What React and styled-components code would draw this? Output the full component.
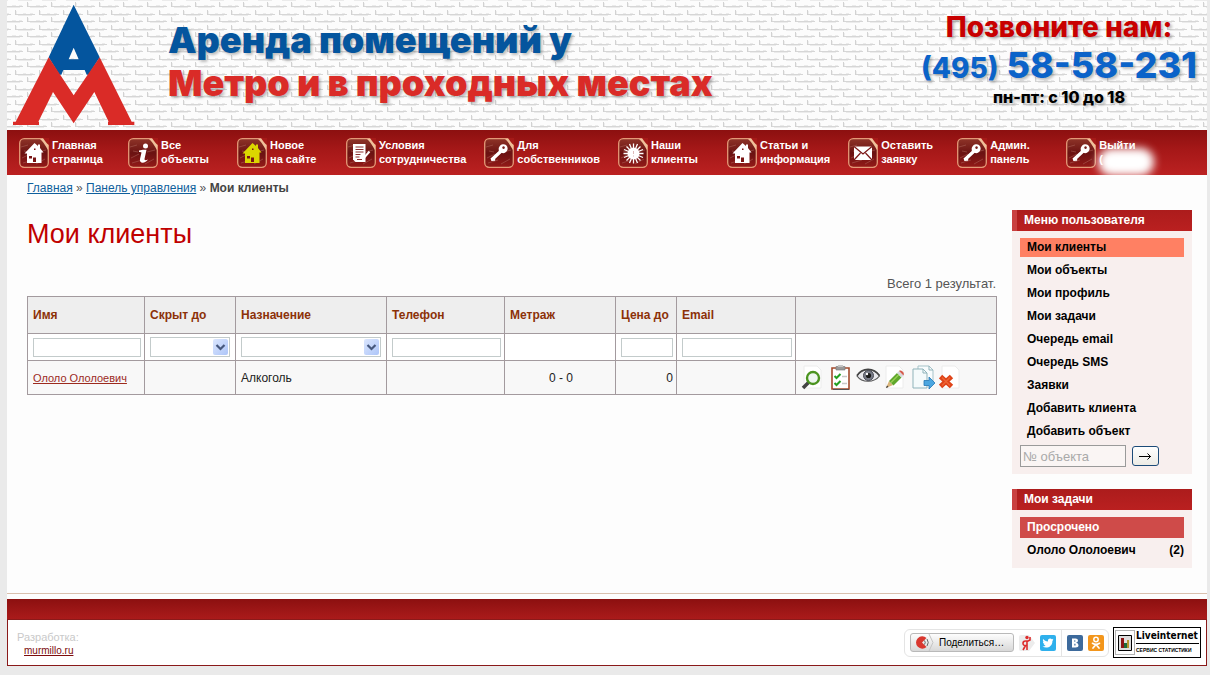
import React from 'react';
import styled, { createGlobalStyle, css } from 'styled-components';

const GlobalStyle = createGlobalStyle`
  * { box-sizing: border-box; }

  body {
    margin: 0;
    background: #eaeaea;
    color: #555;
    font-family: "Liberation Sans", Arial, sans-serif;
    font-size: 12px;
  }

  input, select, button { font-family: inherit; }
`;

const Page = styled.div`
  margin: 0 3px 9px 7px;
  background: #fdfdfd;
`;

const Header = styled.header`
  position: relative;
  display: flex;
  align-items: flex-start;
  height: 130px;
  padding: 4px 10px 0 5px;
  overflow: hidden;
`;

const Texture = styled.svg`
  position: absolute;
  top: 0;
  left: 0;
  width: 100%;
  height: 100%;
`;

const LogoLink = styled.a`
  position: relative;
  display: block;

  svg { display: block; }
`;

const Slogan = styled.div`
  position: relative;
  flex: 1;
  padding: 15px 0 0 32px;
  font-family: Inter, Roboto, sans-serif;
  font-size: 36px;
  font-weight: 900;
  line-height: 43px;
  color: #da2b27;
  text-shadow: 2px 2px 3px rgba(0, 0, 0, 0.25);
  white-space: nowrap;
`;

const SloganTop = styled.div`
  color: #04559e;
`;

const Contacts = styled.div`
  position: relative;
  padding-top: 5px;
  font-family: Inter, Roboto, sans-serif;
  font-weight: 800;
  text-align: center;
  white-space: nowrap;
  text-shadow: 2px 2px 3px rgba(0, 0, 0, 0.25);
`;

const CallUs = styled.div`
  font-size: 28px;
  line-height: 36px;
  color: #c80000;
`;

const Phone = styled.div`
  font-size: 36px;
  line-height: 40px;
  color: #0b63c9;

  small { font-size: 28px; }
`;

const Hours = styled.div`
  font-size: 16px;
  line-height: 18px;
  color: #000;
`;

const Nav = styled.nav`
  display: flex;
  height: 45px;
  padding: 8px 0 0 12px;
  background: linear-gradient(#8c1010, #a61818 45%, #bb2121);
`;

const NavLink = styled.a`
  position: relative;
  display: flex;
  gap: 3px;
  min-width: 109px;
  padding-right: 18px;
  font-weight: bold;
  font-size: 11px;
  line-height: 14px;
  color: #fff;
  text-decoration: none;
  white-space: nowrap;

  svg { flex: none; }
`;

const Glow = styled.span`
  position: absolute;
  top: 10px;
  left: 32px;
  width: 56px;
  height: 28px;
  border-radius: 14px;
  background: #fff;
  filter: blur(4px);
`;

const Crumbs = styled.div`
  padding: 6px 20px 0;
  line-height: 14px;

  a { color: #0f5f9c; }
  b { color: #444; }
`;

const Content = styled.div`
  display: grid;
  grid-template-columns: 1fr 180px;
  gap: 15px;
  padding: 15px 15px 25px 20px;
  border-bottom: 1px solid #d9c0ae;
`;

const Title = styled.h1`
  margin: 9px 0 28px;
  font-size: 27px;
  font-weight: normal;
  line-height: 30px;
  color: #c00000;
`;

const Summary = styled.div`
  padding: 0 1px 5px 0;
  text-align: right;
  font-size: 13px;
  line-height: 14px;
`;

const Grid = styled.table`
  width: 100%;
  table-layout: fixed;
  border-collapse: collapse;
  color: #222;

  th, td {
    border: 1px solid #a39a9e;
    padding: 0 3px 0 5px;
    text-align: left;
  }
  th {
    height: 37px;
    background: #eee;
    color: #8c3108;
    white-space: nowrap;
  }
`;

const FilterRow = styled.tr`
  height: 27px;
  background: #fff;
`;

const DataRow = styled.tr`
  height: 34px;
  background: #f8f8f8;
`;

const Cell = styled.td`
  && { text-align: ${props => props.$align || 'left'}; }
`;

const ClientLink = styled.a`
  font-size: 11px;
  color: #9c2a1e;
`;

const FilterInput = styled.input`
  display: block;
  width: 100%;
  height: 19px;
  border: 1px solid #c3cbcb;
  background: #fff;
  font-size: 11px;
`;

const SelectBox = styled.span`
  position: relative;
  display: block;
  margin-right: 2px;

  select {
    display: block;
    width: 100%;
    height: 20px;
    appearance: none;
    border: 1px solid #c3cbcb;
    border-radius: 0;
    background: #fff;
    font-size: 11px;
  }
  svg {
    position: absolute;
    top: 2px;
    right: 2px;
    pointer-events: none;
  }
`;

const Actions = styled.div`
  display: flex;
  gap: 3px;

  a { display: block; height: 26px; }
  svg { display: block; }
`;

const Panel = styled.section`
  margin-bottom: ${props => (props.$last ? 0 : 15)}px;
  background: #f8efee;
`;

const PanelTitle = styled.h2`
  margin: 0;
  padding-left: 7px;
  border-left: 5px solid #c94040;
  background: linear-gradient(#ac1c1c, #ba2020);
  font-size: 12px;
  line-height: 21px;
  color: #fff;
`;

const PanelBody = styled.div`
  padding: 7px 8px;
`;

const MenuLink = styled.a`
  display: block;
  margin-bottom: 4px;
  padding-left: 7px;
  font-weight: bold;
  line-height: 19px;
  color: #000;
  text-decoration: none;

  ${props => props.$active && css`background: #ff8063;`}
`;

const SearchForm = styled.form`
  display: flex;
  align-items: center;
  gap: 6px;

  input {
    width: 106px;
    height: 22px;
    padding: 0 2px;
    border: 1px solid #9a9a9a;
    background: #faf5f4;
    font-size: 13px;
  }
  input::placeholder { color: #a9a9a9; }
  button {
    width: 27px;
    height: 20px;
    padding: 0;
    border: 1px solid #1c4b78;
    border-radius: 3px;
    background: linear-gradient(#fff, #ecebe5);
    line-height: 0;
  }
`;

const Overdue = styled.div`
  margin-bottom: 2px;
  padding-left: 7px;
  background: #cf4b49;
  font-weight: bold;
  line-height: 21px;
  color: #fff;
`;

const TaskLink = styled.a`
  display: flex;
  justify-content: space-between;
  padding-left: 7px;
  font-weight: bold;
  line-height: 21px;
  color: #000;
  text-decoration: none;
`;

const FooterBar = styled.div`
  height: 20px;
  margin-top: 5px;
  background: linear-gradient(#8c1010, #aa1b1b);
`;

const Footer = styled.footer`
  display: flex;
  justify-content: space-between;
  padding: 7px 5px 7px 9px;
  border: 1px solid #8a1a1a;
  background: #fff;
`;

const Developer = styled.div`
  padding-top: 3px;
  font-size: 11px;
  line-height: 14px;
  color: #c9c9c9;

  a {
    display: block;
    padding-left: 7px;
    color: #7d0c0c;
    font-size: 10px;
  }
`;

const Badges = styled.div`
  display: flex;
  gap: 4px;
  align-items: center;
`;

const ShareBox = styled.div`
  display: flex;
  align-items: center;
  height: 28px;
  gap: 5px;
  padding: 0 4px 0 5px;
  border: 1px solid #e4e4e4;
  border-radius: 6px;

  a, svg { display: block; }
`;

const ShareButton = styled.button`
  display: flex;
  align-items: center;
  gap: 5px;
  width: 104px;
  height: 19px;
  padding: 0 4px;
  border: 1px solid #b9b9b9;
  border-radius: 3px;
  background: linear-gradient(#fdfdfd, #d8d8d8);
  font-size: 10px;
  color: #000;
  white-space: nowrap;

  svg { flex: none; }
`;

const ShareGroup = styled.div`
  display: flex;
  gap: 5px;
  height: 26px;
  align-items: center;
  padding-left: 5px;
  border-left: 1px solid #e4e4e4;
`;

const Counter = styled.a`
  display: flex;
  align-items: center;
  width: 88px;
  height: 31px;
  padding-left: 1px;
  gap: 1px;
  border: 1px solid #000;
  background: #fff;
  color: #000;
  text-decoration: none;
  white-space: nowrap;

  svg { flex: none; }
  span { width: 63px; }
  b {
    display: block;
    border-bottom: 1px solid #000;
    font-family: "DejaVu Sans Condensed", "DejaVu Sans", sans-serif;
    font-size: 10px;
    line-height: 14px;
  }
  small {
    display: block;
    font-size: 5px;
    font-weight: bold;
    line-height: 12px;
  }
`;

const Logo = () => (
  <svg width="124" height="122" viewBox="36 12 372 366">
    <path fill="#04559e" fillRule="evenodd" d="M221 14 L299 172 L266 224 H260 L254 210 H190 L184 224 H178 L146 172 Z M221 143 L206 178 H236 Z" />
    <path fill="#da2b27" d="M146 172 L221 286 L299 172 L395 365 H403 V375 H324 V365 H326 L283 276 L221 370 L159 276 L115 365 H117 V375 H39 V365 H47 Z" />
  </svg>
);

const Bricks = () => (
  <Texture>
    <defs>
      <pattern id="bricks" width="24" height="15" patternUnits="userSpaceOnUse" x="20" y="2">
        <rect width="24" height="15" fill="#fcfcfc" />
        <path d="M1 4.500H20M13 12.500H24M0 12.500H8" stroke="#d6d6d6" />
        <path d="M3 5.500H17M15 13.500H24M0 13.500H5M9 3.500H13M16 3.500H19M20 11.500H23M3 11.500H6" stroke="#ebebeb" />
        <path d="M.500 0V5M12.500 8V13" stroke="#d2d2d2" />
        <path d="M1.500 1V4M13.500 9V12" stroke="#eee" />
      </pattern>
    </defs>
    <rect width="100%" height="100%" fill="url(#bricks)" />
  </Texture>
);

const House = ({ color = '#fff' }) => (
  <g>
    <path fill={color} d="M15.500 5 L19 8 V6.500 H21 V10 L24.500 14.500 H22.500 V25 H8 V15.500 H5.500 Z" />
    <path fill="#7a1515" d="M10 18h3v2.500h-3zM14 19.500h3V24h-3zM15 10.500h1.500V12H15z" />
  </g>
);

const Key = () => (
  <g>
    <path fill="#fff" fillRule="evenodd" d="M22 7a4.500 4.500 0 0 1 .5 6.500a4.500 4.500 0 0 1-5.500 1L10.500 20.500l1 1.500-1.500 1.200-1.300-1.200-1.200 1-1-2.500L14.800 13a4.800 4.800 0 0 1 1-5a4.500 4.500 0 0 1 6.200-1zM19.500 8.300a1.300 1.300 0 1 0 .1 0z" />
    <path d="M8.500 21.500L17 13.500" stroke="#fff" strokeWidth="2.800" strokeLinecap="round" />
  </g>
);

const glyphs = {
  home: <House />,
  fresh: <House color="#dcd600" />,
  info: (
    <g fill="#fff">
      <circle cx="17.500" cy="8" r="2.500" />
      <path d="M11 12.500 C14 11.500 16 11.500 18.500 11.800 L16.500 21 C16.500 22.500 18 22.500 20 21.500 C18 25 11 26.500 12 21 L13.500 14.500 C12.500 14 11.500 14 11 14 Z" />
    </g>
  ),
  terms: (
    <g>
      <path fill="#fff" d="M7 6h12.500v18H9.500L7 21.500z" />
      <path stroke="#8a3030" d="M9.500 9h8M9.500 11.500h8M9.500 14h8M9.500 16.500h5M9.500 19h4M11 21.500h5" />
      <path d="M15 17.500l2.500 3 6-7" fill="none" stroke="#fff" strokeWidth="2" />
    </g>
  ),
  key: <Key />,
  sun: (
    <g>
      <path stroke="#fff" strokeWidth="1.300" d="M15.500 5.500v20M5.500 15.500h20M8.500 8.500l14 14M22.500 8.500l-14 14M11.500 6l8 19M19.500 6l-8 19M6 11.500l19 8M6 19.500l19-8" />
      <circle cx="15.500" cy="15.500" r="6" fill="#fff" />
      <path stroke="#dcb8b8" d="M15.500 13v3M15.500 17.500v1" />
    </g>
  ),
  mail: (
    <g>
      <path fill="#fff" d="M6 8.500h18v13.500H6z" />
      <path fill="none" stroke="#7a1515" strokeWidth="1.200" d="M6 8.500l9 7.500 9-7.500M6 22l6.500-7M24 22l-6.500-7" />
    </g>
  ),
};

const NavIcon = ({ type }) => (
  <svg width="30" height="30" viewBox="0 0 30 30">
    <defs>
      <linearGradient id="plate" x1="0" y1="0" x2="0" y2="1">
        <stop offset="0" stopColor="#8e3428" />
        <stop offset=".5" stopColor="#6a1212" />
        <stop offset="1" stopColor="#941a18" />
      </linearGradient>
    </defs>
    <rect x=".7" y=".7" width="28.600" height="28.600" rx="4.500" fill="url(#plate)" stroke="#e49a78" strokeWidth="1.300" />
    <path d="M2 9l7-2M3 20l8-4M4 25l10-3M17 26l9-5M19 14l8-2M5 13l5 1" stroke="#b06a60" strokeWidth=".7" opacity=".7" />
    <path d="M21 1h5.500L29 5v7C27 9 25.500 5 21 1z" fill="#f0c09a" />
    <path d="M24 0h6v7C28 6 26 3 24 0z" fill="#a51a18" />
    {glyphs[type]}
  </svg>
);

const SelectArrow = () => (
  <svg width="15" height="16" viewBox="0 0 15 16">
    <defs>
      <linearGradient id="arrowBg" x1="0" y1="0" x2="1" y2="1">
        <stop offset="0" stopColor="#dbe6fe" />
        <stop offset="1" stopColor="#adc5f8" />
      </linearGradient>
    </defs>
    <rect width="15" height="16" rx="2" fill="url(#arrowBg)" />
    <path d="M3.500 6l4 4 4-4" fill="none" stroke="#46587e" strokeWidth="2.200" />
  </svg>
);

const Sheet = ({ x = 2 }) => (
  <path d={`M${x} 1h13l4 4v18h-17z`} fill="#fff" stroke="#ececec" />
);

const actionIcons = [
  {
    label: 'Найти', width: 25,
    art: (
      <>
        <Sheet x={3} />
        <path d="M8 17l-6 6" stroke="#444" strokeWidth="3.500" />
        <circle cx="12" cy="13" r="6" fill="#eef6f0" stroke="#4b9420" strokeWidth="2.400" />
      </>
    ),
  },
  {
    label: 'Задачи', width: 24,
    art: (
      <>
        <path d="M3 3h17v21H3z" fill="#fff" stroke="#a34a2c" strokeWidth="1.600" />
        <path d="M4 24.500h16" stroke="#555" />
        <path d="M7 1.500h9V5H7z" fill="#999" stroke="#777" strokeWidth=".6" />
        <path d="M9 0h5v2H9z" fill="#c4c4c4" />
        <path d="M5.500 11l2 2 4-4M5.500 18l2 2 4-4" fill="none" stroke="#22a022" strokeWidth="2" />
        <path d="M13 11.500h5M13 18.500h5" stroke="#c8c8c8" strokeWidth="1.500" />
      </>
    ),
  },
  {
    label: 'Просмотр', width: 25,
    art: (
      <>
        <path d="M1 11C6 3 18 3 23.500 11 18 18 6 18 1 11z" fill="#e8e8ec" stroke="#555" strokeWidth="1.200" />
        <path d="M1 10.500C6 2 18 2 23.500 10.500" fill="none" stroke="#444" strokeWidth="1.500" />
        <circle cx="12.500" cy="10.500" r="5" fill="#777a86" stroke="#484a54" />
        <circle cx="12.500" cy="10.500" r="2.600" fill="#181818" />
        <circle cx="11" cy="9" r="1.200" fill="#fff" />
      </>
    ),
  },
  {
    label: 'Изменить', width: 24,
    art: (
      <>
        <Sheet />
        <path d="M2 23l3-7 4 4z" fill="#d9b47a" />
        <path d="M5 16l8-8 4.500 4.500-8 8z" fill="#5fa72c" />
        <path d="M7 17.500l8-8" stroke="#99cf54" strokeWidth="1.500" />
        <path d="M13 8l2-2 4.500 4.500-2 2z" fill="#d6d8dc" />
        <path d="M15 6c2-1.500 6 1.500 4.500 4.500z" fill="#d55a4c" />
        <path d="M2 23l1-2.500 1.500 1.500z" fill="#333" />
      </>
    ),
  },
  {
    label: 'Копировать', width: 25,
    art: (
      <>
        <path d="M7 1h11l4 4v14H7z" fill="#f8fcfd" stroke="#a6c3c9" />
        <path d="M2 4h10l4 4v15H2z" fill="#f4fafb" stroke="#8fb3ba" />
        <path d="M12 4v4h4M18 1v4h4" fill="none" stroke="#8fb3ba" />
        <path d="M13 15.500h5V12l6 6-6 6v-3.500h-5z" fill="#4ba6e0" stroke="#2477b5" strokeWidth=".8" />
      </>
    ),
  },
  {
    label: 'Удалить', width: 23,
    art: (
      <>
        <Sheet x={3} />
        <path d="M1.500 11.500l11 10M12.500 11.500l-11 10" stroke="#de4318" strokeWidth="5" />
        <path d="M3 12.500l8 8M11 12.500l-8 8" stroke="#ee6434" strokeWidth="1.500" />
      </>
    ),
  },
];

const navItems = [
  { icon: 'home', lines: ['Главная', 'страница'] },
  { icon: 'info', lines: ['Все', 'объекты'] },
  { icon: 'fresh', lines: ['Новое', 'на сайте'] },
  { icon: 'terms', lines: ['Условия', 'сотрудничества'] },
  { icon: 'key', lines: ['Для', 'собственников'] },
  { icon: 'sun', lines: ['Наши', 'клиенты'] },
  { icon: 'home', lines: ['Статьи и', 'информация'] },
  { icon: 'mail', lines: ['Оставить', 'заявку'] },
  { icon: 'key', lines: ['Админ.', 'панель'] },
  { icon: 'key', lines: ['Выйти', '('], glow: true },
];

const columns = [
  { title: 'Имя', width: 117, filter: 'input' },
  { title: 'Скрыт до', width: 91, filter: 'select' },
  { title: 'Назначение', width: 151, filter: 'select' },
  { title: 'Телефон', width: 118, filter: 'input' },
  { title: 'Метраж', width: 111 },
  { title: 'Цена до', width: 61, filter: 'input' },
  { title: 'Email', width: 119, filter: 'input' },
  { title: '' },
];

const menuItems = [
  'Мои клиенты',
  'Мои объекты',
  'Мои профиль',
  'Мои задачи',
  'Очередь email',
  'Очередь SMS',
  'Заявки',
  'Добавить клиента',
  'Добавить объект',
];

const Filter = ({ column }) => {
  if (column.filter === 'input') {
    return <FilterInput type="text" aria-label={column.title} />;
  }
  if (column.filter === 'select') {
    return (
      <SelectBox>
        <select aria-label={column.title}><option value="" /></select>
        <SelectArrow />
      </SelectBox>
    );
  }
  return null;
};

const ClientsTable = () => (
  <Grid>
    <colgroup>
      {columns.map((column, i) => <col key={i} width={column.width} />)}
    </colgroup>
    <thead>
      <tr>{columns.map((column, i) => <th key={i}>{column.title}</th>)}</tr>
      <FilterRow>
        {columns.map((column, i) => <td key={i}><Filter column={column} /></td>)}
      </FilterRow>
    </thead>
    <tbody>
      <DataRow>
        <td><ClientLink href="#client">Ололо Ололоевич</ClientLink></td>
        <td />
        <td>Алкоголь</td>
        <td />
        <Cell $align="center">0 - 0</Cell>
        <Cell $align="right">0</Cell>
        <td />
        <td>
          <Actions>
            {actionIcons.map(({ label, width, art }) => (
              <a key={label} href="#action" aria-label={label}>
                <svg width={width} height="26" viewBox={`0 0 ${width} 26`}>{art}</svg>
              </a>
            ))}
          </Actions>
        </td>
      </DataRow>
    </tbody>
  </Grid>
);

const Sidebar = () => (
  <aside>
    <Panel>
      <PanelTitle>Меню пользователя</PanelTitle>
      <PanelBody>
        {menuItems.map((item, i) => (
          <MenuLink key={item} href="#menu" $active={i === 0}>{item}</MenuLink>
        ))}
        <SearchForm onSubmit={e => e.preventDefault()}>
          <input type="text" placeholder="№ объекта" aria-label="№ объекта" />
          <button type="submit" aria-label="Перейти">
            <svg width="13" height="8" viewBox="0 0 13 8">
              <path d="M0 4.500h12M8.500 1.500l3 3-3 3" fill="none" stroke="#000" />
            </svg>
          </button>
        </SearchForm>
      </PanelBody>
    </Panel>
    <Panel $last>
      <PanelTitle>Мои задачи</PanelTitle>
      <PanelBody>
        <Overdue>Просрочено</Overdue>
        <TaskLink href="#tasks"><span>Ололо Ололоевич</span><span>(2)</span></TaskLink>
      </PanelBody>
    </Panel>
  </aside>
);

const Share = () => (
  <ShareBox>
    <ShareButton type="button">
      <svg width="19" height="17" viewBox="0 0 19 17">
        <path d="M14 0l4 8.500-4 8.500" fill="none" stroke="#c4c4c4" />
        <path d="M7 8.500L11.500 4A6.200 6.200 0 1 0 11.500 13z" fill="#d9372f" />
        <path d="M9.500 6.500q1.500 2 0 4M12 5q2.500 3.500 0 7" fill="none" stroke="#666" />
      </svg>
      Поделиться…
    </ShareButton>
    <a href="#ya" aria-label="Я.ру">
      <svg width="16" height="16" viewBox="0 0 16 16">
        <path d="M0 2q0-2 2-2h8l6 8-6 8H2q-2 0-2-2z" fill="#ececec" />
        <path d="M8 15V6H6.500Q4 6 4 8.300t2.500 2.200H8M6.500 10.500L4 15M8 6.500L11 5V2" fill="none" stroke="#dd2c2c" strokeWidth="1.600" />
        <circle cx="8" cy="2.500" r="1.700" fill="#dd2c2c" />
      </svg>
    </a>
    <a href="#twitter" aria-label="Twitter">
      <svg width="16" height="16" viewBox="0 0 16 16">
        <rect width="16" height="16" rx="2" fill="#2fb0ec" />
        <path d="M13.500 4.600l-1.200.4c.5-.4.700-.7.900-1.200l-1.400.5a2.300 2.300 0 0 0-3.900 2.100C6 6.300 4.300 5.400 3.200 4c-.6 1-.3 2.300.7 3l-1-.3c0 1.100.8 2 1.800 2.300h-1c.3.900 1.100 1.500 2.100 1.600-1 .8-2.100 1.100-3.400 1 4.700 2.700 10.200-.3 10-5.700z" fill="#fff" />
      </svg>
    </a>
    <ShareGroup>
      <a href="#vk" aria-label="ВКонтакте">
        <svg width="16" height="16" viewBox="0 0 16 16">
          <rect width="16" height="16" rx="2" fill="#3d6a9c" />
          <path d="M5 3.500H8.500Q11 3.500 11 5.600T9 7.800Q11.500 8 11.500 10.200T8.500 12.500H5z" fill="#fff" />
          <path d="M7.300 5.300h1v1.500h-1zM7.300 8.800h1.200v1.800H7.300z" fill="#3d6a9c" />
        </svg>
      </a>
      <a href="#ok" aria-label="Одноклассники">
        <svg width="16" height="16" viewBox="0 0 16 16">
          <rect width="16" height="16" rx="2" fill="#f3961c" />
          <circle cx="8" cy="4.500" r="2.200" fill="none" stroke="#fff" strokeWidth="1.500" />
          <path d="M4.500 8.300q3.500 2.200 7 0M8 9.500L5 13M8 9.500l3 3.500" fill="none" stroke="#fff" strokeWidth="1.700" strokeLinecap="round" />
        </svg>
      </a>
    </ShareGroup>
  </ShareBox>
);

const App = () => (
  <>
    <GlobalStyle />
    <Page>
      <Header>
        <Bricks />
        <LogoLink href="#home" aria-label="Главная"><Logo /></LogoLink>
        <Slogan>
          <SloganTop>Аренда помещений у</SloganTop>
          Метро и в проходных местах
        </Slogan>
        <Contacts>
          <CallUs>Позвоните нам:</CallUs>
          <Phone><small>(495)</small> 58-58-231</Phone>
          <Hours>пн-пт: с 10 до 18</Hours>
        </Contacts>
      </Header>
      <Nav>
        {navItems.map(({ icon, lines, glow }) => (
          <NavLink key={lines[0] + lines[1]} href="#nav">
            <NavIcon type={icon} />
            <span>{lines[0]}<br />{lines[1]}</span>
            {glow && <Glow />}
          </NavLink>
        ))}
      </Nav>
      <Crumbs>
        <a href="#home">Главная</a> » <a href="#panel">Панель управления</a> » <b>Мои клиенты</b>
      </Crumbs>
      <Content>
        <main>
          <Title>Мои клиенты</Title>
          <Summary>Всего 1 результат.</Summary>
          <ClientsTable />
        </main>
        <Sidebar />
      </Content>
      <FooterBar />
      <Footer>
        <Developer>
          Разработка:
          <a href="#murmillo">murmillo.ru</a>
        </Developer>
        <Badges>
          <Share />
          <Counter href="#counter">
            <svg width="20" height="25" viewBox="0 0 20 25">
              <rect x=".5" y=".5" width="19" height="24" fill="none" stroke="#666" strokeDasharray="1 1" />
              <path d="M3.500 5.500h13v15h-13z" fill="#ddd" stroke="#000" />
              <path d="M6 8h3v10H6z" fill="#8c1414" />
              <path d="M9 13h3v5H9z" fill="#1d6a3a" />
              <path d="M12 10h2v8h-2z" fill="#b5962c" />
            </svg>
            <span>
              <b>Liveinternet</b>
              <small>СЕРВИС СТАТИСТИКИ</small>
            </span>
          </Counter>
        </Badges>
      </Footer>
    </Page>
  </>
);

export default App;
